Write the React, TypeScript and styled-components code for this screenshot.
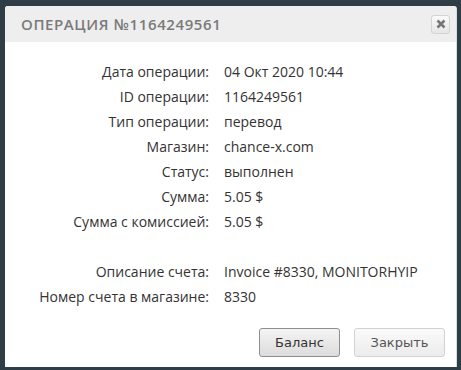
import styled, { createGlobalStyle } from 'styled-components';

const GlobalStyle = createGlobalStyle`
  html, body {
    margin: 0;
    padding: 0;
    background: #2f3d46;
  }
  body {
    width: 461px;
    height: 370px;
    overflow: hidden;
  }
`;

const Overlay = styled.div`
  padding: 6px 5px 0 5px;
`;

const Dialog = styled.div`
  width: 451px;
  height: 361px;
  background: #fff;
  border-radius: 3px 3px 0 0;
  box-shadow: 1px 0 0 #d8dde0;
  display: flex;
  flex-direction: column;
  font-family: 'Open Sans', 'Liberation Sans', sans-serif;
`;

const Header = styled.div`
  height: 36px;
  background: #eeeeee;
  border-radius: 3px 3px 0 0;
  display: flex;
  align-items: center;
  justify-content: space-between;
  padding: 0 6px 0 16px;
`;

const Title = styled.h1`
  margin: 0;
  font-size: 15px;
  font-weight: 600;
  letter-spacing: 0.6px;
  color: #7a7a7a;
`;

const CloseButton = styled.button`
  width: 19px;
  height: 19px;
  padding: 0;
  border: 1px solid #d4d4d4;
  border-radius: 3px;
  background: linear-gradient(#fafafa, #e6e6e6);
  display: flex;
  align-items: center;
  justify-content: center;
`;

const Details = styled.div`
  display: grid;
  grid-template-columns: 204px 1fr;
  column-gap: 15px;
  padding-top: 17px;
  font-size: 14px;
  color: #333;
`;

const Label = styled.div`
  text-align: right;
  line-height: 25px;
  height: 25px;
  white-space: nowrap;
`;

const Value = styled.div`
  line-height: 25px;
  height: 25px;
  white-space: nowrap;
`;

const Spacer = styled.div`
  grid-column: 1 / -1;
  height: 25px;
`;

const Footer = styled.div`
  margin-top: auto;
  display: flex;
  justify-content: flex-end;
  gap: 14px;
  padding: 0 11px 10px 0;
`;

const Button = styled.button<{ $primary?: boolean }>`
  height: 29px;
  width: ${(p) => (p.$primary ? '81px' : '91px')};
  border-radius: 3px;
  font-family: 'DejaVu Sans', Verdana, sans-serif;
  font-size: 13px;
  color: ${(p) => (p.$primary ? '#333' : '#555')};
  border: 1px solid ${(p) => (p.$primary ? '#8f8f8f' : '#d2d2d2')};
  background: ${(p) =>
    p.$primary ? 'linear-gradient(#f4f4f4, #dcdcdc)' : 'linear-gradient(#fafafa, #ececec)'};
`;

const rows: [string, string][] = [
  ['Дата операции:', '04 Окт 2020 10:44'],
  ['ID операции:', '1164249561'],
  ['Тип операции:', 'перевод'],
  ['Магазин:', 'chance-x.com'],
  ['Статус:', 'выполнен'],
  ['Сумма:', '5.05 $'],
  ['Сумма с комиссией:', '5.05 $'],
];

const invoiceRows: [string, string][] = [
  ['Описание счета:', 'Invoice #8330, MONITORHYIP'],
  ['Номер счета в магазине:', '8330'],
];

export default function App() {
  return (
    <>
      <GlobalStyle />
      <Overlay>
        <Dialog>
          <Header>
            <Title>ОПЕРАЦИЯ №1164249561</Title>
            <CloseButton>
              <svg width="10" height="10" viewBox="0 0 10 10">
                <path d="M1.5 1.5 L8.5 8.5 M8.5 1.5 L1.5 8.5" stroke="#777" strokeWidth="2.6" />
              </svg>
            </CloseButton>
          </Header>
          <Details>
            {rows.map(([l, v]) => (
              <>
                <Label key={l}>{l}</Label>
                <Value>{v}</Value>
              </>
            ))}
            <Spacer />
            {invoiceRows.map(([l, v]) => (
              <>
                <Label key={l}>{l}</Label>
                <Value>{v}</Value>
              </>
            ))}
          </Details>
          <Footer>
            <Button $primary>Баланс</Button>
            <Button>Закрыть</Button>
          </Footer>
        </Dialog>
      </Overlay>
    </>
  );
}
